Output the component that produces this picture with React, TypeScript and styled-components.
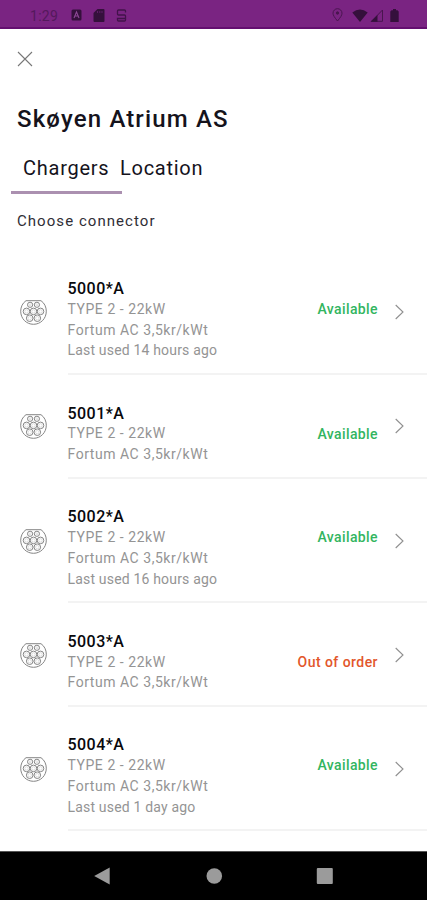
import React from 'react';
import styled, { createGlobalStyle } from 'styled-components';

const GlobalStyle = createGlobalStyle`
  * { box-sizing: border-box; }
  body { margin: 0; background: #fff; }
`;

const Screen = styled.div`
  display: flex;
  flex-direction: column;
  width: 427px;
  height: 900px;
  overflow: hidden;
  background: #fff;
  color: #15131c;
  font-family: Roboto, "Liberation Sans", sans-serif;
`;

const StatusBar = styled.header`
  display: flex;
  justify-content: space-between;
  flex: none;
  height: 29px;
  padding: 3px 28px 0 30px;
  background: #7a2482;
  border-bottom: 2px solid #640f70;
  color: #35103c;
`;

const StatusGroup = styled.div`
  display: flex;
  align-items: center;
`;

const Clock = styled.time`
  width: 41px;
  padding-top: 1px;
  font-size: 14px;
  letter-spacing: 0.3px;
  color: #54195c;
`;

const StatusIcon = styled.svg<{ $gap?: number }>`
  flex: none;
  margin-left: ${({ $gap = 0 }) => $gap}px;
`;

const CloseButton = styled.button`
  flex: none;
  display: flex;
  width: 18px;
  height: 18px;
  margin: 21px 0 0 16px;
  padding: 1px;
  border: 0;
  background: none;
`;

const Title = styled.h1`
  flex: none;
  margin: 35px 0 0 17px;
  font-size: 24px;
  line-height: 32px;
  font-weight: 500;
  letter-spacing: 1.14px;
`;

const Tabs = styled.nav`
  display: flex;
  flex: none;
  height: 40px;
  margin: 19px 0 0 11px;
`;

const Tab = styled.button<{ $active?: boolean }>`
  display: block;
  width: ${({ $active }) => ($active ? '111px' : '96px')};
  padding: ${({ $active }) => ($active ? '1px 0 10px 12px' : '1px 0 10px 0')};
  border: 0;
  border-bottom: 3px solid ${({ $active }) => ($active ? '#ab90b0' : 'transparent')};
  margin-left: ${({ $active }) => ($active ? '0' : '-2px')};
  background: none;
  color: inherit;
  font: 400 20px/26px Roboto, "Liberation Sans", sans-serif;
  letter-spacing: 0.74px;
  text-align: left;
`;

const Prompt = styled.p`
  flex: none;
  margin: 17px 0 0 17px;
  font-size: 15px;
  line-height: 20px;
  letter-spacing: 1.05px;
  color: #302e36;
`;

const List = styled.ul`
  flex: 1;
  min-height: 0;
  margin: 19.6px 0 0;
  padding: 0;
  list-style: none;
`;

const Row = styled.li`
  display: grid;
  grid-template-columns: 67.5px 1fr auto 49px;
  align-items: stretch;
`;

const IconCell = styled.div`
  display: flex;
  align-items: center;
  padding: 2px 0 0 20px;
  border-bottom: 2px solid transparent;
`;

const Details = styled.div`
  padding: 29.5px 0 11.8px;
  border-bottom: 2px solid #f3f3f3;
`;

const Name = styled.h2`
  margin: 0;
  font-size: 16px;
  line-height: 18.8px;
  font-weight: 500;
  letter-spacing: 0.45px;
  color: #08080c;
`;

const Line = styled.p<{ $spacing: number }>`
  margin: 0;
  font-size: 14px;
  line-height: 20.8px;
  letter-spacing: ${({ $spacing }) => $spacing}px;
  color: #949494;
`;

const Status = styled.div<{ $ok: boolean }>`
  padding-top: 48.5px;
  border-bottom: 2px solid #f3f3f3;
  font-size: 14px;
  line-height: 20.8px;
  font-weight: 500;
  letter-spacing: ${({ $ok }) => ($ok ? 0.4 : 0.45)}px;
  color: ${({ $ok }) => ($ok ? '#32b560' : '#e2562b')};
`;

const ChevronCell = styled.div`
  display: flex;
  align-items: center;
  padding: 1px 0 0 16px;
  border-bottom: 2px solid #f3f3f3;
`;

const NavBar = styled.footer`
  display: flex;
  flex: none;
  justify-content: space-between;
  align-items: center;
  height: 49px;
  padding: 0 93px 1px 93px;
  border-top: 1px solid #555;
  background: #000;
`;

interface Charger {
  name: string;
  available: boolean;
  lastUsed?: string;
}

const chargers: Charger[] = [
  { name: '5000*A', available: true, lastUsed: '14 hours ago' },
  { name: '5001*A', available: true },
  { name: '5002*A', available: true, lastUsed: '16 hours ago' },
  { name: '5003*A', available: false },
  { name: '5004*A', available: true, lastUsed: '1 day ago' },
];

// Type 2 socket: flat-topped shell with two small and five large pins.
const pins: [number, number, number][] = [
  [10.1, 5.8, 2.6], [16.9, 5.8, 2.6],
  [6.5, 12.4, 3.3], [13.5, 12.4, 3.3], [20.5, 12.4, 3.3],
  [9.7, 19.2, 3.3], [17.3, 19.2, 3.3],
];

const Type2Icon = () => (
  <svg width="27" height="27" viewBox="0 0 27 27" fill="none" stroke="#858585" strokeWidth="1">
    <path d="M6 1.7H21C24.4 4 26.3 8 26.3 12.2C26.3 19.6 20.7 25.3 13.5 25.3S.7 19.6.7 12.2C.7 8 2.6 4 6 1.7Z" />
    {pins.map(([cx, cy, r]) => (
      <g key={`${cx}-${cy}`}>
        <circle cx={cx} cy={cy} r={r} />
        <circle cx={cx} cy={cy} r={r - 1.6} strokeWidth="0.25" />
      </g>
    ))}
  </svg>
);

const Chevron = () => (
  <svg width="12" height="18" viewBox="0 0 12 18" fill="none" stroke="#8f8f8f" strokeWidth="1.1">
    <path d="M1.7 2L9 9L1.7 16" />
  </svg>
);

export default function App() {
  return (
    <>
      <GlobalStyle />
      <Screen>
        <StatusBar>
          <StatusGroup>
            <Clock>1:29</Clock>
            <StatusIcon width="11" height="12" viewBox="0 0 11 12">
              <rect x="0.5" y="0.5" width="10" height="11" rx="1.5" fill="#35103c" />
              <path d="M3 9L5.5 3L8 9M4 7H7" fill="none" stroke="#8d4795" strokeWidth="1.1" />
            </StatusIcon>
            <StatusIcon $gap={11} width="12" height="13" viewBox="0 0 12 13">
              <path d="M4.5 0H10.5Q11.5 0 11.5 1V12Q11.5 13 10.5 13H1.5Q.5 13 .5 12V4Z" fill="#35103c" />
              <path d="M4.5 2V4M6.8 2V4M9 2V4" stroke="#6b2173" strokeWidth="0.8" />
            </StatusIcon>
            <StatusIcon $gap={11} width="11" height="13" viewBox="0 0 11 13" fill="none" stroke="#42124a" strokeWidth="1.3">
              <path d="M9.5 3.5V2Q9.5 1 8.5 1H2.5Q1.5 1 1.5 2V5Q1.5 6 2.5 6H8.5Q9.5 6 9.5 7V11Q9.5 12 8.5 12H2.5Q1.5 12 1.5 11V9.5H9" />
            </StatusIcon>
          </StatusGroup>
          <StatusGroup>
            <StatusIcon width="11" height="14" viewBox="0 0 11 14" fill="none" stroke="#49154f">
              <path d="M5.5 13C2.5 9.4 1 7.2 1 5.2a4.5 4.5 0 0 1 9 0C10 7.2 8.5 9.4 5.5 13Z" />
              <circle cx="5.5" cy="5" r="1.2" fill="#49154f" />
            </StatusIcon>
            <StatusIcon $gap={9} width="16" height="13" viewBox="0 0 16 13">
              <path d="M0.3 3.4Q8-2.4 15.7 3.4L8 13Z" fill="#35103c" />
            </StatusIcon>
            <StatusIcon $gap={2} width="14" height="13" viewBox="0 0 14 13">
              <path d="M1.5 12.3H12.5V1Z" fill="none" stroke="#49154f" />
              <path d="M0.5 12.8H7.5V6Z" fill="#35103c" />
            </StatusIcon>
            <StatusIcon $gap={6} width="9" height="13" viewBox="0 0 9 13">
              <path d="M3 0H6V1.3H7.5L8.7 2.5V13H.3V2.5L1.5 1.3H3Z" fill="#35103c" />
            </StatusIcon>
          </StatusGroup>
        </StatusBar>
        <CloseButton aria-label="Close">
          <svg width="16" height="16" viewBox="0 0 16 16" stroke="#777" strokeWidth="1.1">
            <path d="M1 1L15 15M15 1L1 15" />
          </svg>
        </CloseButton>
        <Title>Skøyen Atrium AS</Title>
        <Tabs>
          <Tab $active>Chargers</Tab>
          <Tab>Location</Tab>
        </Tabs>
        <Prompt>Choose connector</Prompt>
        <List>
          {chargers.map(({ name, available, lastUsed }) => (
            <Row key={name}>
              <IconCell><Type2Icon /></IconCell>
              <Details>
                <Name>{name}</Name>
                <Line $spacing={0.55}>TYPE 2 - 22kW</Line>
                <Line $spacing={0.54}>Fortum AC 3,5kr/kWt</Line>
                {lastUsed && <Line $spacing={0.18}>Last used {lastUsed}</Line>}
              </Details>
              <Status $ok={available}>{available ? 'Available' : 'Out of order'}</Status>
              <ChevronCell><Chevron /></ChevronCell>
            </Row>
          ))}
        </List>
        <NavBar>
          <svg width="18" height="18" viewBox="0 0 18 18"><path d="M1.2 9L16.7 .5V17.5Z" fill="#9b9b9b" /></svg>
          <svg width="18" height="18" viewBox="0 0 18 18"><circle cx="9.3" cy="9" r="7.8" fill="#9b9b9b" /></svg>
          <svg width="18" height="18" viewBox="0 0 18 18"><rect x="0.8" y="1" width="16" height="16" rx="1" fill="#9b9b9b" /></svg>
        </NavBar>
      </Screen>
    </>
  );
}
